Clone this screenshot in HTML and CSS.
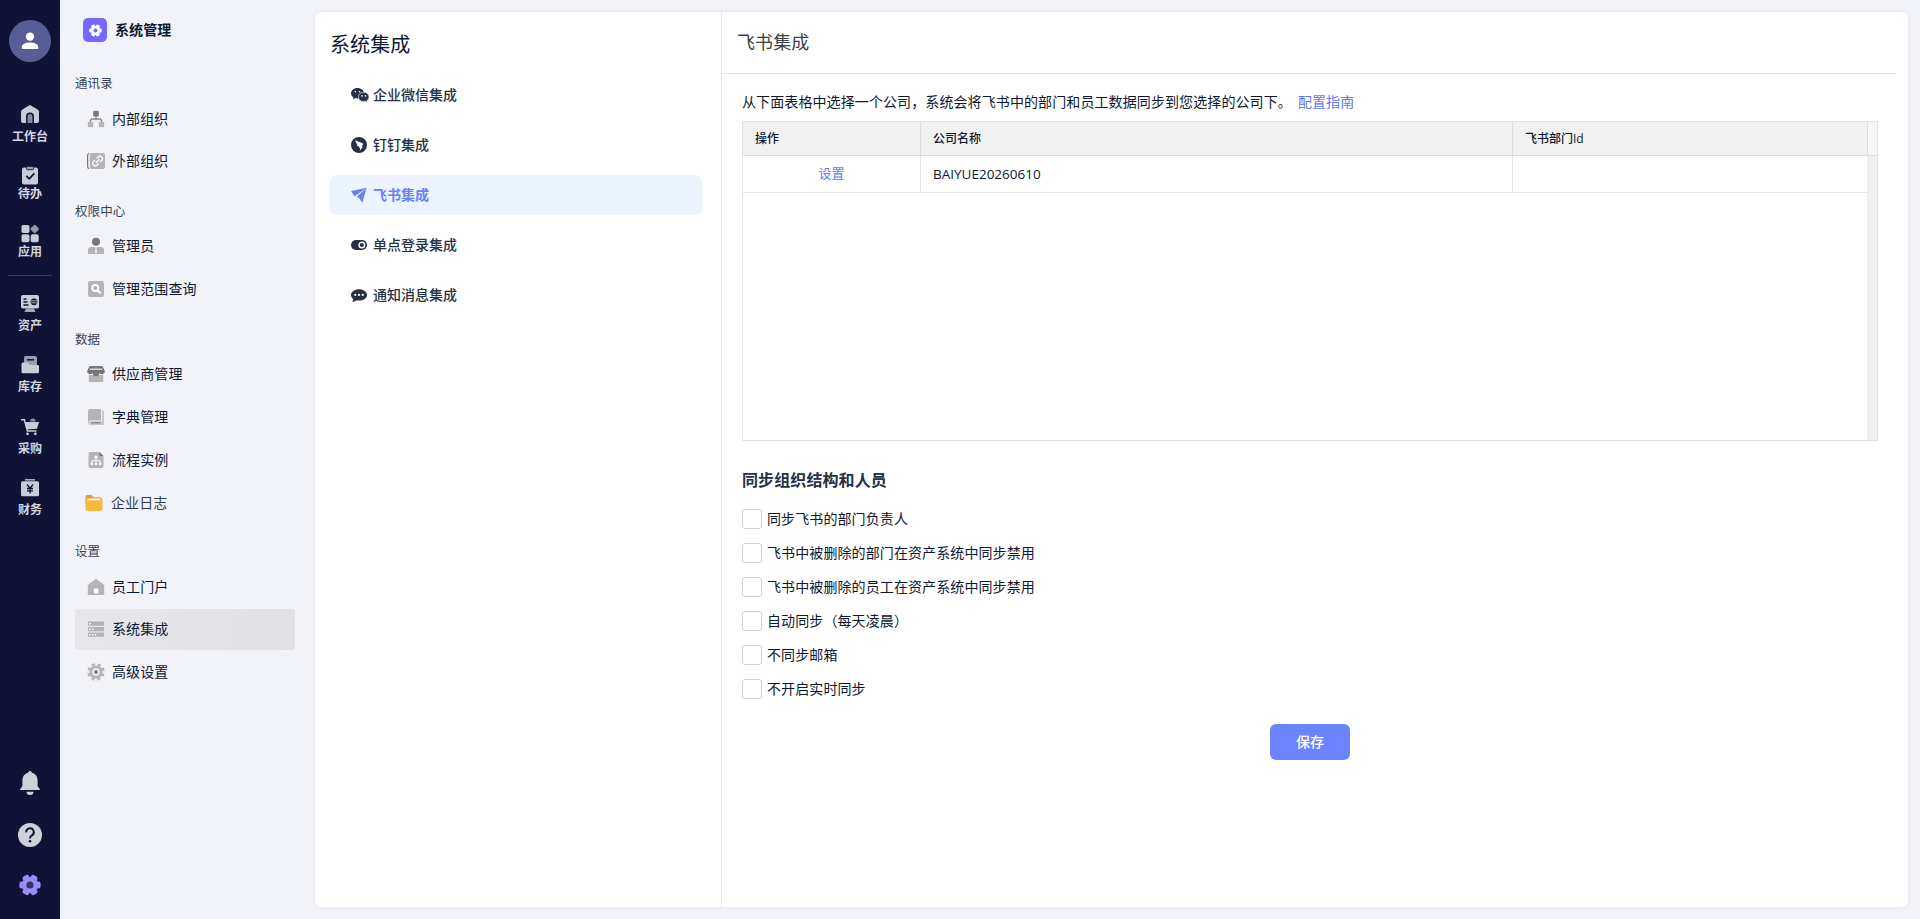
FILE: index.html
```html
<!DOCTYPE html>
<html lang="zh-CN">
<head>
  <meta charset="UTF-8">
  <meta name="viewport" content="width=device-width, initial-scale=1.0">
  <title>系统集成</title>
  <link rel="stylesheet" href="styles.css">
</head>
<body>
  <div class="app">

    <!-- 左侧主导航 -->
    <div class="rail">
      <div class="avatar">
        <svg width="18" height="18" viewBox="0 0 18 18" fill="#fff"><circle cx="9" cy="4.6" r="4.2"/><path d="M.8 17v-1.6C.8 12 5 10.600 9 10.600s8.200 1.400 8.200 4.800V17z"/></svg>
      </div>
      <ul class="rail-nav">
        <li>
          <svg width="20" height="20" viewBox="0 0 20 20"><path fill="#c9ccd9" d="M10 1l7.600 4.400a2.600 2.600 0 0 1 1.400 2.300V17a2 2 0 0 1-2 2H3a2 2 0 0 1-2-2V7.700a2.600 2.600 0 0 1 1.400-2.300z"/><path fill="#878aa2" stroke="#111336" stroke-width="1.500" d="M6.800 19v-6.500a3.200 3.200 0 0 1 6.400 0V19"/></svg>
          <span>工作台</span>
        </li>
        <li>
          <svg width="20" height="20" viewBox="0 0 20 20"><rect x="2" y="2.500" width="16" height="17" rx="2" fill="#c9ccd9"/><rect x="6.500" y="1.300" width="7" height="3.400" rx="1" fill="#9a9db0" stroke="#111336" stroke-width=".9"/><path fill="none" stroke="#111336" stroke-width="1.800" d="M6.300 10.800l3 3 5-5.400"/></svg>
          <span>待办</span>
        </li>
        <li>
          <svg width="20" height="20" viewBox="0 0 20 20" fill="#c9ccd9"><rect x="1.500" y="2" width="8" height="8" rx="1.800"/><rect x="1.500" y="11.200" width="8" height="8" rx="1.800"/><rect x="10.700" y="11.200" width="8" height="8" rx="1.800"/><rect x="11.400" y="2.700" width="6.600" height="6.600" rx="1.300" fill="#9497aa" transform="rotate(45 14.700 6)"/></svg>
          <span>应用</span>
        </li>
        <li class="line"></li>
        <li>
          <svg width="20" height="20" viewBox="0 0 20 20"><rect x="1" y="1" width="18" height="13.500" rx="1.800" fill="#c9ccd9"/><path fill="#a5a8ba" d="M6 14.500h8l1.500 3.600h-11z"/><path stroke="#111336" stroke-width="1.300" d="M3.500 5h3M3.500 8h4M3.500 11h5"/><circle cx="14" cy="7.800" r="3.400" fill="#111336"/><path stroke="#c9ccd9" stroke-width=".8" d="M11 6.800h6M11 8.800h6"/></svg>
          <span>资产</span>
        </li>
        <li>
          <svg width="20" height="20" viewBox="0 0 20 20"><path fill="#9a9db0" d="M6 1h9a2 2 0 0 1 2 2v7H4V3a2 2 0 0 1 2-2z"/><path stroke="#111336" stroke-width="1.500" d="M7 4.800h7"/><path fill="#c9ccd9" d="M2.500 7.500h5.200l2 2.500h8a1.300 1.300 0 0 1 1.300 1.300v5.500a1.500 1.500 0 0 1-1.500 1.500h-15A1.500 1.500 0 0 1 1.500 17V9z"/></svg>
          <span>库存</span>
        </li>
        <li>
          <svg width="20" height="20" viewBox="0 0 20 20"><path fill="none" stroke="#c9ccd9" stroke-width="1.500" d="M1 2.800h3.400l3 11.200h9"/><path fill="#c9ccd9" d="M4.600 5H19l-2 6.800-10.300.7z"/><path fill="#8b8ea3" d="M10 4.500a2.800 3 0 0 1 5.600 0z"/><circle cx="7.500" cy="16.800" r="1.400" fill="#c9ccd9"/><circle cx="15.300" cy="16.800" r="1.400" fill="#c9ccd9"/></svg>
          <span>采购</span>
        </li>
        <li>
          <svg width="20" height="20" viewBox="0 0 20 20"><path stroke="#a5a8ba" stroke-width="1.600" d="M5 1.800h10"/><rect x="1" y="3.200" width="18" height="15" rx="1.500" fill="#c9ccd9"/><path fill="none" stroke="#111336" stroke-width="1.300" d="M7 6.500l3 3.700 3-3.700M7 10.500h6M7 12.800h6M10 10v5.500"/></svg>
          <span>财务</span>
        </li>
      </ul>
      <div class="rail-foot">
        <svg width="22" height="26" viewBox="0 0 22 26" fill="#ced1da"><path d="M11 1a2 2 0 0 1 2 1.800c3.600 1 5.600 4 5.600 7.500v5.500c0 1.500 2.400 2.700 2.400 4.200H1c0-1.500 2.400-2.700 2.400-4.200v-5.500C3.400 6.800 5.400 3.800 9 2.800A2 2 0 0 1 11 1z"/><path d="M7.500 21.800h7a3.500 3.200 0 0 1-7 0z"/></svg>
        <svg width="24" height="24" viewBox="0 0 24 24"><circle cx="12" cy="12" r="12" fill="#ced1da"/><path fill="none" stroke="#111336" stroke-width="1.900" d="M8.200 9.400A3.800 3.800 0 1 1 13.600 12.600C12.300 13.300 12 14 12 15.400"/><circle cx="12" cy="18.200" r="1.300" fill="#111336"/></svg>
        <svg width="22" height="22" viewBox="0 0 22 22"><g fill="#9a8cf8"><circle cx="11" cy="11" r="8"/><rect x="7.500" y=".4" width="7" height="21.200" rx="2.200" transform="rotate(30 11 11)"/><rect x="7.500" y=".4" width="7" height="21.200" rx="2.200" transform="rotate(90 11 11)"/><rect x="7.500" y=".4" width="7" height="21.200" rx="2.200" transform="rotate(150 11 11)"/></g><circle cx="11" cy="11" r="3.600" fill="#373068"/></svg>
      </div>
    </div>

    <!-- 二级菜单 -->
    <div class="side">
      <div class="side-head">
        <span class="logo">
          <svg width="13" height="13" viewBox="0 0 22 22"><g fill="#fff"><circle cx="11" cy="11" r="7.600"/><rect x="7.500" y=".4" width="7" height="21.200" rx="2.200" transform="rotate(30 11 11)"/><rect x="7.500" y=".4" width="7" height="21.200" rx="2.200" transform="rotate(90 11 11)"/><rect x="7.500" y=".4" width="7" height="21.200" rx="2.200" transform="rotate(150 11 11)"/></g><circle cx="11" cy="11" r="3.400" fill="#7468ff"/></svg>
        </span>
        <h1>系统管理</h1>
      </div>

      <div class="group">
        <h2>通讯录</h2>
        <a class="item">
          <svg width="18" height="18" viewBox="0 0 18 18"><rect x="6.200" y="1" width="5.600" height="5.600" rx="1" fill="#777"/><path fill="none" stroke="#888" stroke-width="1.400" d="M9 6v3M3.400 12.500V11a2 2 0 0 1 2-2h7.200a2 2 0 0 1 2 2v1.500"/><rect x=".8" y="11.800" width="5.400" height="5.400" rx="1.200" fill="#b4b4b4"/><rect x="11.800" y="11.800" width="5.400" height="5.400" rx="1.200" fill="#b4b4b4"/></svg>
          内部组织
        </a>
        <a class="item">
          <svg width="18" height="18" viewBox="0 0 18 18"><path fill="none" stroke="#777" stroke-width="1.200" d="M2.100 1.500C.8 1.500.6 2.500.6 4v10c0 1.500.2 2.500 1.500 2.500"/><rect x="2.800" y="1" width="15.200" height="16" rx="2" fill="#b4b4b4"/><g fill="none" stroke="#fff" stroke-width="1.400" transform="rotate(-45 10.600 9)"><path d="M9.600 6.500H7.300a2.500 2.500 0 0 0 0 5h2.300M11.600 6.500h2.300a2.500 2.500 0 0 1 0 5h-2.300M8.200 9H13"/></g></svg>
          外部组织
        </a>
      </div>

      <div class="group">
        <h2>权限中心</h2>
        <a class="item">
          <svg width="18" height="18" viewBox="0 0 18 18"><circle cx="9" cy="4.800" r="4" fill="#777"/><path fill="#b4b4b4" d="M1 17v-3.500A3.500 3.500 0 0 1 4.500 10h9a3.500 3.500 0 0 1 3.500 3.500V17z"/><path fill="#fff" d="M8.300 10h1.400l-.3 1.500.5 4.500H8.100l.5-4.500z"/></svg>
          管理员
        </a>
        <a class="item">
          <svg width="18" height="18" viewBox="0 0 18 18"><rect x="1" y="1" width="16" height="16" rx="2.200" fill="#b4b4b4"/><circle cx="8.300" cy="8" r="3" fill="none" stroke="#fff" stroke-width="1.800"/><path stroke="#fff" stroke-width="2" stroke-linecap="round" d="M10.800 10.600l2.200 2.200"/></svg>
          管理范围查询
        </a>
      </div>

      <div class="group data">
        <h2>数据</h2>
        <a class="item">
          <svg width="18" height="18" viewBox="0 0 18 18"><path fill="#b4b4b4" d="M1.800 10h14.400v7H1.800z"/><path fill="#777" d="M3.200 1h11.600a1 1 0 0 1 .9.600L17.800 6a2.900 2.900 0 0 1-5.400 1.800 3.400 3.400 0 0 1-6.800 0A2.900 2.900 0 0 1 .2 6l2.100-4.400a1 1 0 0 1 .9-.6z"/><path stroke="#f2f3f9" stroke-width="1.200" d="M3 4.200h12"/></svg>
          供应商管理
        </a>
        <a class="item">
          <svg width="18" height="18" viewBox="0 0 18 18"><path fill="#b4b4b4" d="M3.500 1H14v11.500H3.500L1 14.500v-11A2.500 2.500 0 0 1 3.500 1z"/><path fill="#c9c9cc" d="M15 2.500h1a1 1 0 0 1 1 1V17H3.500A2.400 2.400 0 0 1 1 14.700l2.500-1.500H15z"/><path stroke="#777" stroke-width="1.100" d="M4 14.800h9.500"/></svg>
          字典管理
        </a>
        <a class="item">
          <svg width="18" height="18" viewBox="0 0 18 18"><path fill="#b4b4b4" d="M4 1h8.500L16.500 5v10a2 2 0 0 1-2 2h-11a2 2 0 0 1-2-2V3a2 2 0 0 1 2-2z"/><path fill="#777" d="M12.500 1l4 4h-4z"/><path fill="none" stroke="#fff" stroke-width="1" d="M9 6.500v6M4.800 12.500V9.800h8.400v2.700"/><path fill="#fff" d="M7.700 4.800h2.600v2.600H7.700zM3.700 11.700h2.400v2.400H3.700zM7.800 11.700h2.400v2.400H7.800zM11.900 11.700h2.400v2.400h-2.400z"/></svg>
          流程实例
        </a>
        <a class="item log">
          <svg width="18" height="18" viewBox="0 0 18 18"><path fill="#f29b38" d="M2 1h4.500l2 2.200H15a2 2 0 0 1 2 2V10H.5V2.500A1.500 1.500 0 0 1 2 1z"/><path fill="#fff" d="M2.500 4.500h13V8h-13z"/><path fill="#fbb73f" d="M.5 6.200h17v8.800a2 2 0 0 1-2 2h-13a2 2 0 0 1-2-2z"/></svg>
          企业日志
        </a>
      </div>

      <div class="group">
        <h2>设置</h2>
        <a class="item">
          <svg width="18" height="18" viewBox="0 0 18 18"><path fill="#b4b4b4" d="M9 .8l7.500 5.700c.4.400.7.900.7 1.400V17H.8V7.900c0-.5.300-1 .7-1.400z"/><rect x="6.800" y="10.500" width="4.600" height="5" rx=".6" fill="#fff"/></svg>
          员工门户
        </a>
        <a class="item active">
          <svg width="18" height="18" viewBox="0 0 18 18"><path fill="#b2b3b5" d="M1 1.500h16v4.300H1zM1 7h16v4.300H1zM1 12.500h16v4.300H1z"/><path fill="#fff" d="M2.200 3h1.500v1.500H2.200zM2.200 8.500h1.500V10H2.200zM5 8.500h1.500V10H5zM2.200 14h1.500v1.500H2.200zM5 14h1.500v1.500H5zM7.800 14h1.500v1.500H7.800z"/></svg>
          系统集成
        </a>
        <a class="item">
          <svg width="18" height="18" viewBox="0 0 18 18"><circle cx="9" cy="9" r="5.200" fill="none" stroke="#b4b4b4" stroke-width="2.800"/><circle cx="9" cy="9" r="7.400" fill="none" stroke="#b4b4b4" stroke-width="2.800" stroke-dasharray="2.900 2.910" stroke-dashoffset="1.450" transform="rotate(22.500 9 9)"/><circle cx="9" cy="9" r="1.900" fill="#777"/></svg>
          高级设置
        </a>
      </div>
    </div>

    <!-- 主体 -->
    <div class="main">
      <div class="types">
        <h3>系统集成</h3>
        <ul>
          <li>
            <svg width="18" height="16" viewBox="0 0 18 16"><path fill="#273045" d="M6.500 1C2.900 1 0 3.300 0 6.200c0 1.600.9 3 2.300 4L1.900 12.300l2.400-1.200c.7.200 1.400.3 2.200.3 3.600 0 6.500-2.300 6.500-5.200S10.100 1 6.500 1z"/><path fill="#273045" stroke="#fff" stroke-width=".6" d="M12.700 5.300c-3 0-5.300 2-5.300 4.600s2.300 4.700 5.300 4.700c.6 0 1.200-.1 1.700-.3l2 1-.4-1.700c1.200-.8 2-2.100 2-3.700 0-2.600-2.300-4.600-5.300-4.600z"/><g fill="#fff"><circle cx="4.400" cy="4.700" r=".8"/><circle cx="8.600" cy="4.700" r=".8"/><circle cx="11" cy="8.900" r=".8"/><circle cx="14.500" cy="8.900" r=".8"/></g></svg>
            企业微信集成
          </li>
          <li>
            <svg width="16" height="16" viewBox="0 0 16 16"><circle cx="8" cy="8" r="8" fill="#273045"/><path fill="#fff" d="M4.300 3.200l7.300 3.100c.5.300.5.700.3 1.200L11 9.500l.9.200-3.100 4 .4-2.600-1-.1.400-1.200c-1.700-.2-2.700-1.100-2.900-2.300l1.100.2c-1.200-.9-2.100-2.400-2.500-4.500z"/></svg>
            钉钉集成
          </li>
          <li class="on">
            <svg width="16" height="16" viewBox="0 0 16 16"><path fill="#6b80f5" d="M15.600.8L0 4l3.600 5.200 7.600-5.100zM15.600.8L5.800 9.800l2.600 1.700 3 4.200z"/></svg>
            飞书集成
          </li>
          <li>
            <svg width="16" height="16" viewBox="0 0 16 16"><rect y="3" width="16" height="10" rx="5" fill="#273045"/><circle cx="10.800" cy="8" r="2.800" fill="none" stroke="#fff" stroke-width="1.400"/></svg>
            单点登录集成
          </li>
          <li>
            <svg width="16" height="16" viewBox="0 0 16 16"><path fill="#273045" d="M8 2.300c4.400 0 8 2.500 8 5.600s-3.600 5.600-8 5.600c-.9 0-1.700-.1-2.500-.3-1.200 1-2.700 1.600-4.300 1.600.7-.8 1.100-1.700 1.200-2.700C.9 11.100 0 9.600 0 7.900c0-3.100 3.600-5.600 8-5.600z"/><g fill="#fff"><circle cx="4.300" cy="7.900" r="1.100"/><circle cx="8" cy="7.900" r="1.100"/><circle cx="11.700" cy="7.900" r="1.100"/></g></svg>
            通知消息集成
          </li>
        </ul>
      </div>

      <div class="detail">
        <div class="detail-head">飞书集成</div>
        <div class="detail-body">
          <p class="tip">从下面表格中选择一个公司，系统会将飞书中的部门和员工数据同步到您选择的公司下。<a>配置指南</a></p>

          <div class="grid">
            <div class="row head">
              <div>操作</div>
              <div>公司名称</div>
              <div>飞书部门<span>Id</span></div>
              <div class="gutter"></div>
            </div>
            <div class="scroll">
              <div class="row">
                <div class="op"><a>设置</a></div>
                <div class="name">BAIYUE20260610</div>
                <div></div>
              </div>
              <div class="bar"></div>
            </div>
          </div>

          <h4>同步组织结构和人员</h4>
          <div class="checks">
            <label><i></i>同步飞书的部门负责人</label>
            <label><i></i>飞书中被删除的部门在资产系统中同步禁用</label>
            <label><i></i>飞书中被删除的员工在资产系统中同步禁用</label>
            <label><i></i>自动同步（每天凌晨）</label>
            <label><i></i>不同步邮箱</label>
            <label><i></i>不开启实时同步</label>
          </div>
          <button class="save">保存</button>
        </div>
      </div>
    </div>

  </div>
</body>
</html>
```
FILE: styles.css
```css
*{
  margin: 0;
  padding: 0;
  box-sizing: border-box;
}
body{
  font-family: "Noto Sans CJK SC", sans-serif;
  font-size: 14px;
  letter-spacing: 0.1px;
  color: #0d1730;
  background: #f2f3f9;
}
ul{
  list-style: none;
}
svg{
  display: block;
  flex: none;
}
.app{
  display: flex;
  height: 919px;
  overflow: hidden;
}

/* 主导航 */
.rail{
  display: flex;
  flex-direction: column;
  align-items: center;
  width: 60px;
  padding: 20px 0 23px;
  background: #111336;
}
.avatar{
  display: flex;
  align-items: center;
  justify-content: center;
  width: 42px;
  height: 42px;
  border-radius: 50%;
  background: #585d95;
}
.rail-nav{
  width: 60px;
  margin-top: 42px;
}
.rail-nav li{
  display: flex;
  flex-direction: column;
  align-items: center;
  height: 61.3px;
  font-size: 12px;
  font-weight: 700;
  line-height: 18px;
  letter-spacing: 0;
  color: #d3d5e0;
}
.rail-nav li:nth-child(1){
  height: 61px;
}
.rail-nav li:nth-child(2){
  height: 58px;
}
.rail-nav li:nth-child(3){
  height: 57px;
}
.rail-nav span{
  margin-top: 3px;
}
.rail-nav li:nth-child(2) span,
.rail-nav li:nth-child(3) span{
  margin-top: -1px;
}
.rail-nav li:nth-child(n+5) span{
  margin-top: 2px;
}
.rail-nav .line{
  height: 1px;
  margin: -5px 8px 18px;
  background: #3d3f5c;
}
.rail-foot{
  display: flex;
  flex-direction: column;
  align-items: center;
  gap: 27px;
  margin-top: auto;
}

/* 二级菜单 */
.side{
  width: 255px;
  padding: 18px 20px 0 15px;
}
.side-head{
  display: flex;
  align-items: center;
  height: 24px;
  padding-left: 8px;
  margin-bottom: 29px;
}
.logo{
  display: flex;
  align-items: center;
  justify-content: center;
  width: 24px;
  height: 24px;
  margin-right: 8px;
  border-radius: 5px;
  background: #7468ff;
}
.side-head h1{
  height: 24px;
  font-size: 14px;
  line-height: 22px;
}
.group{
  margin-bottom: 17.3px;
}
.group h2{
  height: 24px;
  margin-bottom: 3px;
  font-size: 12.5px;
  font-weight: 400;
  line-height: 24px;
  color: #3a4258;
}
.item{
  display: flex;
  align-items: center;
  gap: 7px;
  height: 41px;
  padding: 0 0 2px 12px;
  margin-bottom: 1.7px;
  border-radius: 3px;
}
.item svg,
.types svg{
  margin-top: 2px;
}
.item:last-child{
  margin-bottom: 0;
}
.item.log{
  padding-left: 10px;
  gap: 8px;
  color: #323b50;
}
.group.data{
  margin-bottom: 16px;
}
.item.active{
  background: linear-gradient(90deg, #e6e6eb, #e0e0e5);
}

/* 主体 */
.main{
  display: flex;
  flex: 1;
  height: 895px;
  margin: 12px 12px 0 0;
  background: #fff;
  border-radius: 6px;
  box-shadow: 0 0 4px rgba(40,40,60,0.08);
}
.types{
  width: 407px;
  padding: 15px 19px 0 15px;
  border-right: 1px solid #e6e7ea;
}
.types h3{
  margin-bottom: 14px;
  font-size: 20px;
  font-weight: 400;
  line-height: 34px;
}
.types li{
  display: flex;
  align-items: center;
  gap: 6px;
  height: 40px;
  padding: 0 0 2px 21px;
  margin-bottom: 10px;
  border-radius: 6px;
  font-weight: 500;
  letter-spacing: 0;
  color: #273045;
}
.types li:first-child{
  gap: 4px;
}
.types .on{
  font-weight: 700;
  color: #6b80f5;
  background: #ebf4fe;
}

.detail{
  flex: 1;
}
.detail-head{
  height: 62px;
  margin-right: 12px;
  padding-left: 15px;
  border-bottom: 1px solid #e6e7ea;
  font-size: 18px;
  line-height: 59px;
  color: #3d3f45;
}
.detail-body{
  display: flex;
  flex-direction: column;
  padding: 16px 30px 0 20px;
}
.tip{
  height: 31px;
  line-height: 22px;
}
.tip a{
  margin-left: 6px;
}
.tip a,
.op a{
  color: #6378ee;
}
.grid{
  height: 320px;
  border: 1px solid #e3e3e3;
}
.row{
  display: grid;
  grid-template-columns: 178px 592px 354px;
  height: 37px;
  line-height: 34px;
  border-bottom: 1px solid #e6e7ea;
}
.row>div{
  padding-left: 12px;
  border-right: 1px solid #e6e7ea;
}
.row>.op{
  padding-left: 0;
  text-align: center;
  font-size: 13px;
}
.row>.name{
  font-family: "Open Sans", sans-serif;
  font-size: 13.5px;
  line-height: 37px;
  letter-spacing: 0;
}
.row>div:last-child{
  border-right: 0;
}
.row.head{
  grid-template-columns: 178px 592px 355px 1fr;
  height: 34px;
  line-height: 32px;
  font-size: 12px;
  font-weight: 500;
  letter-spacing: 0;
  background: #f1f1f1;
  border-color: #dcdcdc;
}
.row.head>div{
  border-color: #dcdcdc;
}
.row.head span{
  font-family: "Open Sans", sans-serif;
  font-weight: 400;
}
.row.head>.gutter{
  padding: 0;
  background: #f6f6f6;
}
.scroll{
  display: flex;
  height: 284px;
}
.bar{
  flex: 1;
  background: #efefef;
}
.detail-body h4{
  margin: 25px 0 17px;
  font-size: 16px;
  line-height: 26px;
  color: #273045;
}
.checks{
  display: flex;
  flex-direction: column;
  gap: 14px;
}
.checks label{
  display: flex;
  height: 20px;
  line-height: 18px;
}
.checks i{
  width: 20px;
  height: 20px;
  margin-right: 5px;
  border: 1px solid #d0d2d6;
  border-radius: 3px;
  background: #fff;
}
.save{
  align-self: center;
  width: 80px;
  height: 36px;
  padding-bottom: 2px;
  margin-top: 25px;
  border: 0;
  border-radius: 6px;
  font-family: inherit;
  font-size: 14px;
  font-weight: 500;
  color: #fff;
  background: #6b84fd;
}
```
